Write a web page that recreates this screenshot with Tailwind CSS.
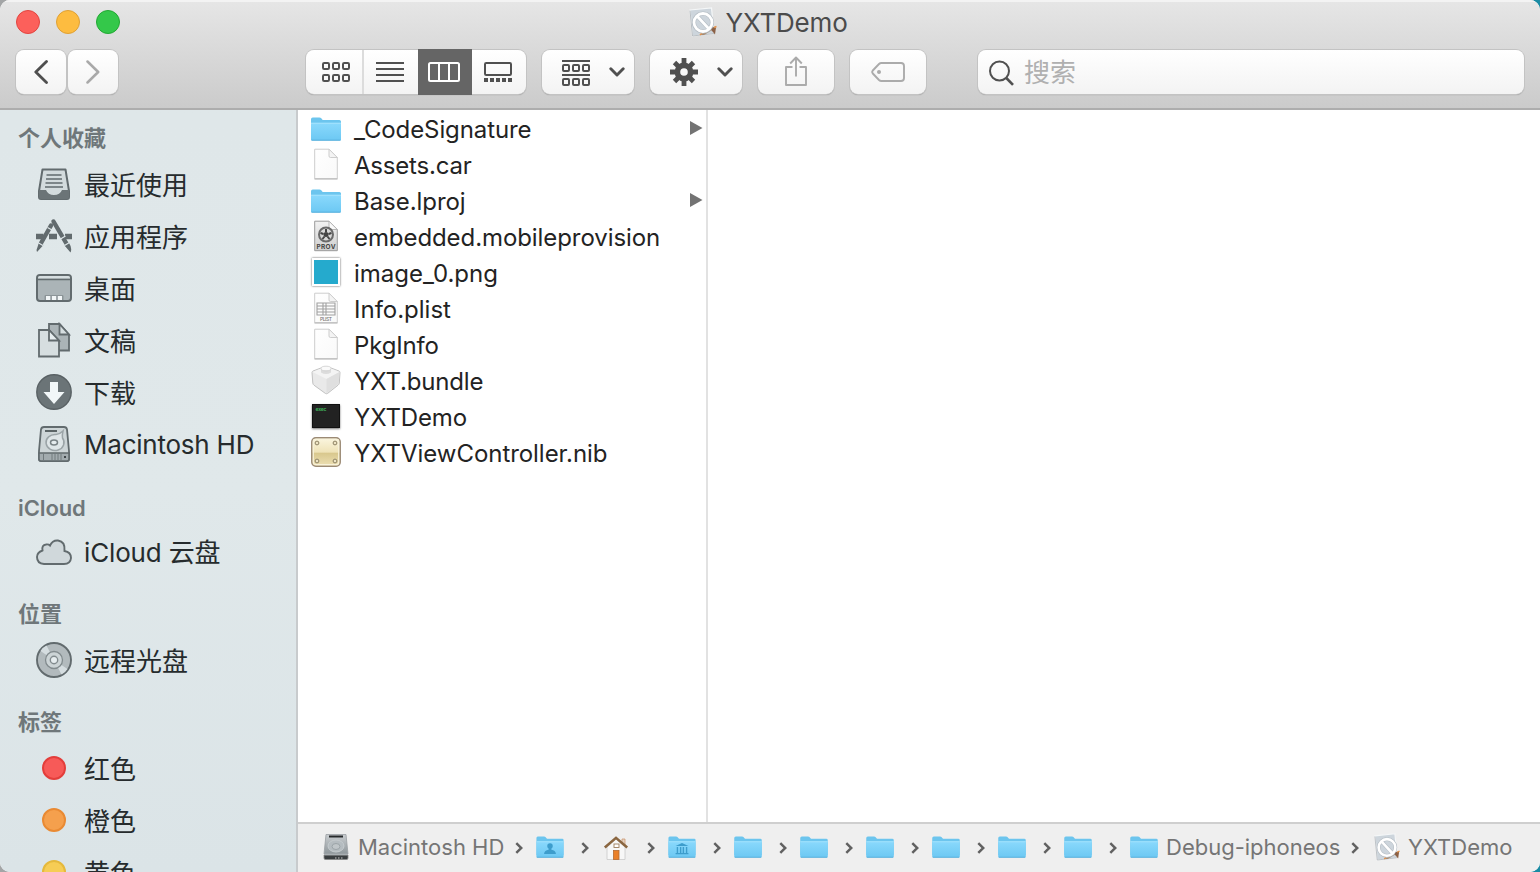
<!DOCTYPE html>
<html lang="zh-CN">
<head>
<meta charset="utf-8">
<title>YXTDemo</title>
<script src="https://cdn.jsdelivr.net/npm/@tailwindcss/browser@4"></script>
</head>
<body class="bg-linear-to-r from-[#a3a5a6] from-50% to-[#1a8ba3] to-50% font-['Inter','Noto_Sans_CJK_SC',sans-serif]">
<svg class="absolute size-0">
  <defs>
    <linearGradient id="gFolder" x1="0" y1="0" x2="0" y2="1"><stop offset="0" stop-color="#8ad9fc"/><stop offset="1" stop-color="#6cc8f3"/></linearGradient>
    <linearGradient id="gPaper" x1="0" y1="0" x2="1" y2="1"><stop offset="0" stop-color="#fff"/><stop offset="1" stop-color="#f9f9f9"/></linearGradient>
    <linearGradient id="gProv" x1="0" y1="0" x2="0" y2="1"><stop offset="0" stop-color="#f2f2f2"/><stop offset="1" stop-color="#cfcfcf"/></linearGradient>
    <linearGradient id="gNib" x1="0" y1="0" x2="0" y2="1"><stop offset="0" stop-color="#fbf6e0"/><stop offset=".5" stop-color="#efe3b8"/><stop offset=".55" stop-color="#d9c88e"/><stop offset="1" stop-color="#ede0b4"/></linearGradient>
    <linearGradient id="gDisk" x1="0" y1="0" x2="0" y2="1"><stop offset="0" stop-color="#c9cdd0"/><stop offset="1" stop-color="#8f979b"/></linearGradient>
  </defs>
  <symbol id="folder" viewBox="0 0 30 24">
    <path d="M0 2.200Q0 .5 1.700 .5H8.500Q9.600 .5 10.300 1.300L11.200 2.400Q11.700 3 12.600 3H28.400Q30 3 30 4.600V21H0Z" fill="#6cc5ee"/>
    <path d="M0 5.800H30V22.200Q30 23.500 28.700 23.500H1.300Q0 23.500 0 22.200Z" fill="url(#gFolder)"/>
    <path d="M0 6.300H30" stroke="#a4e3fd" stroke-width="1"/>
    <path d="M.5 23.200H29.500" stroke="#56aedb" stroke-width="1"/>
  </symbol>
  <symbol id="doc" viewBox="0 0 24 32">
    <path d="M.7 1.200H15L23.300 9.500V30.700H.7Z" fill="url(#gPaper)" stroke="#cdcdcd" stroke-width="1"/>
    <path d="M15 1.200V8Q15 9.500 16.500 9.500H23.300Z" fill="#f4f4f4" stroke="#cdcdcd" stroke-width="1"/>
    <path d="M.5 31H23.500" stroke="#b3b3b3" stroke-width="1"/>
  </symbol>
  <symbol id="app" viewBox="0 0 28 30">
    <path d="M1 3L22.500 .8L25 26.500L3.500 29Z" fill="#cdd5dc" stroke="#f5f7f8" stroke-width="1.200"/>
    <path d="M1 3.600L3.500 29L25 26.500" fill="none" stroke="#aab0b5" stroke-width=".8"/>
    <path d="M11 28L23.500 19.500L25.500 21.500L15 28Z" fill="#a98b70"/>
    <path d="M20 20L27 20.500L26 27.500L23.500 24.500Z" fill="#8b6045"/>
    <path d="M25 20.500L27.500 19.500M11 28L13 26" stroke="#e3924b" stroke-width="1.500"/>
    <circle cx="14" cy="15.500" r="9" fill="none" stroke="#b4bcc3" stroke-width="4"/>
    <path d="M8.200 9.200L20 21.800" stroke="#b4bcc3" stroke-width="4"/>
    <circle cx="14" cy="15.500" r="9" fill="none" stroke="#fff" stroke-width="2.800"/>
    <path d="M8 9L20 22" stroke="#fff" stroke-width="2.800"/>
  </symbol>
  <symbol id="chev" viewBox="0 0 8 12"><path d="M1.300 1.200L6.300 6L1.300 10.800" fill="none" stroke="#616161" stroke-width="2.500"/></symbol>
  <symbol id="down" viewBox="0 0 16 10"><path d="M1.800 1.800L8 8L14.200 1.800" fill="none" stroke="#505050" stroke-width="2.900" stroke-linecap="round" stroke-linejoin="round"/></symbol>
</svg>

<div class="flex h-[872px] w-[1540px] flex-col overflow-hidden rounded-[10px] bg-white">
  <header class="flex h-[110px] shrink-0 flex-col border-b-2 border-[#adadad] bg-linear-to-b from-[#e6e6e6] to-[#cbcbcb] shadow-[inset_0_2px_0_#f3f3f3]">
    <div class="grid h-[50px] grid-cols-[300px_1fr_304px]">
      <div class="flex gap-4 pl-4 pt-[10px]">
        <i class="size-6 rounded-full border border-[#e2443f] bg-[#fc605b]"></i>
        <i class="size-6 rounded-full border border-[#dfa034] bg-[#fdbc40]"></i>
        <i class="size-6 rounded-full border border-[#22a833] bg-[#34c84a]"></i>
      </div>
      <div class="flex h-[44px] items-center justify-center gap-[9px]">
        <svg class="h-[30px] w-7"><use href="#app"/></svg>
        <h1 class="w-[122px] whitespace-nowrap text-[26px] tracking-[-0.200px] text-[#4b4b4b]">YXTDemo</h1>
      </div>
    </div>
    <div class="flex h-11 pl-4">
      <button class="flex h-11 w-[50px] items-center justify-center rounded-[8px] bg-linear-to-b from-white to-[#f3f3f3] shadow-[0_0_0_1px_#c3c3c3,0_1px_1px_#888]">
        <svg class="h-6 w-[14px]" viewBox="0 0 14 24" fill="none" stroke="#4f4f4f" stroke-width="2.800" stroke-linecap="round" stroke-linejoin="round"><path d="M12.500 1.500L1.800 12L12.500 22.500"/></svg>
      </button>
      <button class="ml-[2px] flex h-11 w-[50px] items-center justify-center rounded-[8px] bg-linear-to-b from-white to-[#f3f3f3] shadow-[0_0_0_1px_#c3c3c3,0_1px_1px_#888]">
        <svg class="h-6 w-[14px]" viewBox="0 0 14 24" fill="none" stroke="#a9a9a9" stroke-width="2.500" stroke-linecap="round" stroke-linejoin="round"><path d="M1.500 1.500L12.200 12L1.500 22.500"/></svg>
      </button>
      <div class="ml-[188px] flex h-11 w-[220px] rounded-[8px] bg-linear-to-b from-white to-[#f3f3f3] shadow-[0_0_0_1px_#c3c3c3,0_1px_1px_#888]">
        <div class="flex w-[58px] items-center justify-center border-r-2 border-[#dcdcdc] pl-1">
          <svg class="h-5 w-7" viewBox="0 0 28 20" fill="none" stroke="#505050" stroke-width="2"><rect x="1" y="1" width="6" height="6" rx="1.200"/><rect x="11" y="1" width="6" height="6" rx="1.200"/><rect x="21" y="1" width="6" height="6" rx="1.200"/><rect x="1" y="13" width="6" height="6" rx="1.200"/><rect x="11" y="13" width="6" height="6" rx="1.200"/><rect x="21" y="13" width="6" height="6" rx="1.200"/></svg>
        </div>
        <div class="flex w-[54px] items-center justify-center pr-[2px]">
          <svg class="h-5 w-7" viewBox="0 0 28 20" stroke="#505050" stroke-width="2"><path d="M0 1H28M0 7H28M0 13H28M0 19H28"/></svg>
        </div>
        <div class="-mt-px flex h-[46px] w-[54px] items-center justify-center bg-[#656565] pr-[2px]">
          <svg class="h-5 w-8" viewBox="0 0 32 20" fill="none" stroke="#fff" stroke-width="2"><rect x="1" y="1" width="30" height="18" rx="1.500"/><path d="M11 1V19M21 1V19"/></svg>
        </div>
        <div class="flex w-[54px] items-center justify-center pr-[2px]">
          <svg class="h-5 w-7" viewBox="0 0 28 20"><rect x="1" y="1" width="26" height="12" rx="1.200" fill="none" stroke="#505050" stroke-width="2"/><path d="M0 18H28" stroke="#505050" stroke-width="4" stroke-dasharray="4 2"/></svg>
        </div>
      </div>
      <button class="ml-4 flex h-11 w-[92px] items-center gap-[19px] rounded-[8px] bg-linear-to-b from-white to-[#f3f3f3] pl-5 shadow-[0_0_0_1px_#c3c3c3,0_1px_1px_#888]">
        <svg class="mt-[2px] h-[26px] w-7" viewBox="0 0 28 26" fill="none" stroke="#505050" stroke-width="2"><path d="M0 1H28M0 15H28"/><rect x="1" y="5" width="6" height="6" rx="1"/><rect x="11" y="5" width="6" height="6" rx="1"/><rect x="21" y="5" width="6" height="6" rx="1"/><rect x="1" y="19" width="6" height="6" rx="1"/><rect x="11" y="19" width="6" height="6" rx="1"/><rect x="21" y="19" width="6" height="6" rx="1"/></svg>
        <svg class="h-[10px] w-4"><use href="#down"/></svg>
      </button>
      <button class="ml-4 flex h-11 w-[92px] items-center gap-[19px] rounded-[8px] bg-linear-to-b from-white to-[#f3f3f3] pl-5 shadow-[0_0_0_1px_#c3c3c3,0_1px_1px_#888]">
        <svg class="size-7" viewBox="-14 -14 28 28"><g stroke="#505050" stroke-width="4.800"><path d="M0 -14V-7M0 14V7M-14 0H-7M14 0H7M-9.500 -9.500L-5 -5M9.500 9.500L5 5M-9.500 9.500L-5 5M9.500 -9.500L5 -5"/></g><circle r="6.600" fill="none" stroke="#505050" stroke-width="5.600"/></svg>
        <svg class="h-[10px] w-4"><use href="#down"/></svg>
      </button>
      <button class="ml-4 flex h-11 w-[76px] items-center justify-center rounded-[8px] bg-linear-to-b from-white to-[#f3f3f3] shadow-[0_0_0_1px_#c3c3c3,0_1px_1px_#888]">
        <svg class="-mt-[3px] h-[30px] w-[22px]" viewBox="0 0 22 30" fill="none" stroke="#ababab" stroke-width="1.900" stroke-linejoin="round"><path d="M7.500 11H1V29H21V11H14.500M11 20.500V1.500M5.200 7.500L11 1.500L16.800 7.500"/></svg>
      </button>
      <button class="ml-4 flex h-11 w-[76px] items-center justify-center rounded-[8px] bg-linear-to-b from-white to-[#f3f3f3] shadow-[0_0_0_1px_#c3c3c3,0_1px_1px_#888]">
        <svg class="h-5 w-[34px]" viewBox="0 0 34 20"><path d="M10.500 1H30Q33 1 33 4V16Q33 19 30 19H10.500Q9 19 8 18L1.800 11.500Q.6 10 1.800 8.500L8 2Q9 1 10.500 1Z" fill="none" stroke="#ababab" stroke-width="1.900"/><circle cx="8" cy="10" r="2" fill="#ababab"/></svg>
      </button>
      <div class="ml-[52px] flex h-11 w-[546px] items-center gap-[10px] rounded-[8px] bg-linear-to-b from-white to-[#f3f3f3] pl-[10px] shadow-[0_0_0_1px_#c3c3c3,0_1px_1px_#888]">
        <svg class="mt-[2px] size-[26px]" viewBox="0 0 26 26" fill="none" stroke="#505050" stroke-width="2"><circle cx="11.500" cy="11" r="9.500"/><path d="M18.300 18L25 24.800" stroke-width="2.600"/></svg>
        <span class="mt-px text-[26px] text-[#b0b0b0]">搜索</span>
      </div>
    </div>
  </header>

  <div class="flex min-h-0 flex-1">
    <aside class="flex w-[298px] shrink-0 flex-col overflow-hidden border-r-2 border-[#c8cbcd] bg-linear-to-b from-[#dfe7e9] via-[#e0e8ea] to-[#dbe4e7] text-[26px] text-[#262b2d]">
      <h2 class="h-12 shrink-0 pl-[18px] pt-3 text-[22px] font-semibold leading-8 text-[#6f777a]">个人收藏</h2>
      <div class="flex h-[52px] shrink-0 items-center gap-3 pl-9">
        <svg class="size-9" viewBox="0 0 36 36"><path d="M6.500 3.500H29.500L33 25V31Q33 33 31 33H5Q3 33 3 31V25Z" fill="#d3dbdd" stroke="#626b6e" stroke-width="2" stroke-linejoin="round"/><path d="M3 24H10Q12 29 18 29Q24 29 26 24H33V31Q33 33 31 33H5Q3 33 3 31Z" fill="#6b7477"/><path d="M10.500 9H25.500M10 13H26M9.500 17H26.500M9 21H27" stroke="#626b6e" stroke-width="1.600"/></svg>
        <span class="pt-[2px]">最近使用</span>
      </div>
      <div class="flex h-[52px] shrink-0 items-center gap-3 pl-9">
        <svg class="size-9" viewBox="0 0 36 36" stroke="#626b6e" fill="#626b6e"><path d="M0 18.500H7.500M13 18.500H21M29 18.500H36" stroke-width="5.600"/><path d="M15 7.500L4.800 25.500" stroke-width="4.400" stroke-linecap="round"/><path d="M17.500 3.500L31 26.500" stroke-width="4.400" stroke-linecap="round"/><path d="M3 24.500L7.500 27L1 34L.5 32Z M33 25L28.500 27.500L34.500 34.500Q36.500 30 33 25Z" stroke="none"/><path d="M11.500 9.500L16 12M1.800 24.500L7.300 27.700M28.500 27.500L33.500 24.500M24.500 21L29.500 18" stroke="#dfe7e9" stroke-width="1.200"/></svg>
        <span class="pt-[2px]">应用程序</span>
      </div>
      <div class="flex h-[52px] shrink-0 items-center gap-3 pl-9">
        <svg class="size-9" viewBox="0 0 36 36"><rect x="1" y="5" width="34" height="26" rx="3" fill="#abb4b7" stroke="#626b6e" stroke-width="2"/><path d="M2 8Q2 6 4 6H32Q34 6 34 8V8.500H2Z" fill="#d6dee0"/><path d="M1 9.500H35" stroke="#626b6e" stroke-width="1.600"/><path d="M9 30V25.500H27V30" fill="#8c9598" stroke="#8c9598" stroke-width="1"/><path d="M10 28H26" stroke="#f2f6f7" stroke-width="4" stroke-dasharray="4.300 1.600"/></svg>
        <span class="pt-[2px]">桌面</span>
      </div>
      <div class="flex h-[52px] shrink-0 items-center gap-3 pl-9">
        <svg class="size-9" viewBox="0 0 36 36" stroke="#626b6e" stroke-width="1.800"><path d="M13 2H23.500L33 12.500V28.500H13Z" fill="#abb4b7"/><path d="M23.500 2V12.500H33Z" fill="#d6dee0"/><path d="M3 8H13L23 18.500V34.500H3Z" fill="#d6dee0"/><path d="M13 8V18.500H23Z" fill="#e6edef"/></svg>
        <span class="pt-[2px]">文稿</span>
      </div>
      <div class="flex h-[52px] shrink-0 items-center gap-3 pl-9">
        <svg class="size-9" viewBox="0 0 36 36"><circle cx="18" cy="18" r="17.200" fill="#6b7477" stroke="#596164" stroke-width="1.400"/><path d="M14 8H22V18H28.500L18 30L7.500 18H14Z" fill="#f2f7f8"/></svg>
        <span class="pt-[2px]">下载</span>
      </div>
      <div class="flex h-[52px] shrink-0 items-center gap-3 pl-9">
        <svg class="size-9" viewBox="0 0 36 36"><path d="M8 1H28Q30.500 1 31 3.500L33 25V33Q33 35 31 35H5Q3 35 3 33V25L5 3.500Q5.500 1 8 1Z" fill="#cdd5d7" stroke="#626b6e" stroke-width="1.800"/><path d="M3 27H33V33Q33 35 31 35H5Q3 35 3 33Z" fill="#a2abae" stroke="#626b6e" stroke-width="1.600"/><path d="M9 5H21" stroke="#4f575a" stroke-width="1.800"/><path d="M27 5Q26 9 26.500 12A9 8 0 1 1 20 8.500Q24 8 27 5Z" fill="#dfe6e8" stroke="#9ba4a7" stroke-width="1.500"/><ellipse cx="18" cy="16.500" rx="3.500" ry="2.500" fill="#e6edef" stroke="#7a8386" stroke-width="1.500"/><path d="M7.500 27V34M16 27V34M19 27V34M22 27V34M25 27V34" stroke="#717a7d" stroke-width="1"/><rect x="28" y="30" width="2" height="2" fill="#3f4649"/></svg>
        <span class="whitespace-nowrap tracking-[-0.230px]">Macintosh HD</span>
      </div>
      <h2 class="h-14 shrink-0 pl-[18px] pt-[22px] text-[22px] font-semibold leading-8 tracking-[-0.100px] text-[#6f777a]">iCloud</h2>
      <div class="flex h-[52px] shrink-0 items-center gap-3 pl-9">
        <svg class="size-9" viewBox="0 0 36 36"><path d="M8 30Q1 29.500 1 23Q1 18.500 6.500 16.500Q5.500 11 10 10.500Q12.500 10 14 11.500Q16.500 6 22 6.500Q29.500 7.500 28.500 17Q35 18 35 24Q34.500 30 28 30Z" fill="#d0d8db" stroke="#626b6e" stroke-width="1.900"/></svg>
        <span class="whitespace-nowrap pt-px tracking-[-0.150px]">iCloud 云盘</span>
      </div>
      <h2 class="h-14 shrink-0 pl-[18px] pt-5 text-[22px] font-semibold leading-8 text-[#6f777a]">位置</h2>
      <div class="flex h-[52px] shrink-0 items-center gap-3 pl-9">
        <svg class="size-9" viewBox="0 0 36 36"><circle cx="18" cy="18" r="17" fill="#b2babd" stroke="#626b6e" stroke-width="1.900"/><path d="M18 18L4.500 9Q7 5 10.500 3.500ZM18 18L31.500 27Q29 31 25.500 32.500Z" fill="#d5dde0"/><circle cx="18" cy="18" r="8.500" fill="#ccd4d6" stroke="#828b8e" stroke-width="1.300"/><circle cx="18" cy="18" r="3.700" fill="#e6edef" stroke="#828b8e" stroke-width="1.400"/></svg>
        <span class="pt-[2px]">远程光盘</span>
      </div>
      <h2 class="h-14 shrink-0 pl-[18px] pt-5 text-[22px] font-semibold leading-8 text-[#6f777a]">标签</h2>
      <div class="flex h-[52px] shrink-0 items-center gap-[18px] pl-[42px]"><i class="size-6 rounded-full border-2 border-[#e33e3b] bg-[#f75a58]"></i><span class="pt-[2px]">红色</span></div>
      <div class="flex h-[52px] shrink-0 items-center gap-[18px] pl-[42px]"><i class="size-6 rounded-full border-2 border-[#e98a33] bg-[#f5a04d]"></i><span class="pt-[2px]">橙色</span></div>
      <div class="flex h-[52px] shrink-0 items-center gap-[18px] pl-[42px]"><i class="size-6 rounded-full border-2 border-[#e5b93c] bg-[#f6cd55]"></i><span class="pt-[2px]">黄色</span></div>
    </aside>

    <main class="flex min-w-0 flex-1 flex-col">
      <div class="flex min-h-0 flex-1">
        <ul class="w-[410px] border-r-2 border-[#e2e2e2] pt-[2px] text-[24px] leading-9 text-[#232323]">
          <li class="flex h-9 items-center pl-3 pr-[3px]"><span class="flex w-8 justify-center"><svg class="mb-[3px] h-6 w-[30px]"><use href="#folder"/></svg></span><span class="ml-3 flex-1 tracking-[-0.100px]">_CodeSignature</span><svg class="mb-1 h-[14px] w-[14px]" viewBox="0 0 14 14"><path d="M1 0L13.500 7L1 14Z" fill="#737373"/></svg></li>
          <li class="flex h-9 items-center pl-3"><span class="flex w-8 justify-center"><svg class="mb-1 h-8 w-6"><use href="#doc"/></svg></span><span class="ml-3 tracking-[-0.200px]">Assets.car</span></li>
          <li class="flex h-9 items-center pl-3 pr-[3px]"><span class="flex w-8 justify-center"><svg class="mb-[3px] h-6 w-[30px]"><use href="#folder"/></svg></span><span class="ml-3 flex-1 tracking-[-0.050px]">Base.lproj</span><svg class="mb-1 h-[14px] w-[14px]" viewBox="0 0 14 14"><path d="M1 0L13.500 7L1 14Z" fill="#737373"/></svg></li>
          <li class="flex h-9 items-center pl-3"><span class="flex w-8 justify-center"><svg class="mb-1 h-8 w-6" viewBox="0 0 24 32"><path d="M.7 1.200H15L23.300 9.500V30.700H.7Z" fill="url(#gProv)" stroke="#9b9b9b"/><path d="M15 1.200V9.500H23.300Z" fill="#fafafa" stroke="#b5b5b5"/><circle cx="12" cy="14.500" r="7" fill="#d8d8d8" stroke="#6a6a6a" stroke-width="2"/><circle cx="12" cy="14.500" r="2.500" fill="#444"/><path d="M12 9V12M6.500 13L9.500 14M17.500 13L14.500 14M8.500 19L10.500 16.500M15.500 19L13.500 16.500" stroke="#444" stroke-width="2"/><text x="12" y="29" text-anchor="middle" font-size="6.500" font-weight="700" fill="#444" textLength="19">PROV</text></svg></span><span class="ml-3 whitespace-nowrap tracking-[-0.080px]">embedded.mobileprovision</span></li>
          <li class="flex h-9 items-center pl-3"><span class="flex w-8 justify-center"><i class="mb-1 block size-7 border-2 border-white bg-[#25aacd] shadow-[0_0_2px_#555]"></i></span><span class="ml-3">image_0.png</span></li>
          <li class="flex h-9 items-center pl-3"><span class="flex w-8 justify-center"><svg class="mb-1 h-8 w-6" viewBox="0 0 24 32"><use href="#doc" width="24" height="32"/><path d="M3 11H21V23H3ZM3 14H21M3 17H21M3 20H21M9 11V23M12 11V23" fill="none" stroke="#a0a0a0" stroke-width="1.100"/><text x="12" y="29" text-anchor="middle" font-size="5" font-weight="500" fill="#777" textLength="12">PLIST</text></svg></span><span class="ml-3">Info.plist</span></li>
          <li class="flex h-9 items-center pl-3"><span class="flex w-8 justify-center"><svg class="mb-1 h-8 w-6"><use href="#doc"/></svg></span><span class="ml-3 tracking-[-0.150px]">PkgInfo</span></li>
          <li class="flex h-9 items-center pl-3"><span class="flex w-8 justify-center"><svg class="mb-1 h-[30px] w-[30px]" viewBox="0 0 30 30"><path d="M1 7.500Q1 6.500 2 6L10 3H20L28 6Q29 6.500 29 7.500L28.300 18Q28 19.500 27 20.200L16.500 28.500Q15.500 29 14.500 28.500L3 20.200Q2 19.500 1.800 18Z" fill="#e9e9e9" stroke="#c2c2c2"/><path d="M1.500 7L10 3.500H20L28.500 7L15.500 14Z" fill="#f4f4f4"/><path d="M15.500 14L28.500 7L27.800 18.500L15.500 28.300Z" fill="#dfdfdf"/><path d="M10 3.500V7.500Q15 10.500 20 7.500V3.500" fill="#dcdcdc"/><ellipse cx="15" cy="3.500" rx="5" ry="2.300" fill="#fafafa" stroke="#cdcdcd" stroke-width=".8"/></svg></span><span class="ml-3 tracking-[-0.150px]">YXT.bundle</span></li>
          <li class="flex h-9 items-center pl-3"><span class="flex w-8 justify-center"><svg class="mb-1 h-6 w-7 shadow-[0_1px_2px_#777]" viewBox="0 0 28 24"><path d="M0 0H28V24H0Z" fill="#222"/><path d="M.5 .5H27.500V23.500H.5Z" fill="none" stroke="#111"/><text x="3.500" y="6.500" font-size="5" font-weight="700" fill="#3fae58" textLength="11">exec</text></svg></span><span class="ml-3 tracking-[-0.150px]">YXTDemo</span></li>
          <li class="flex h-9 items-center pl-3"><span class="flex w-8 justify-center"><svg class="mb-1 size-[30px]" viewBox="0 0 30 30"><rect x=".8" y=".8" width="28.400" height="28.400" rx="4" fill="url(#gNib)" stroke="#9b8a75" stroke-width="1.500"/><rect x="2.300" y="2.300" width="25.400" height="25.400" rx="2.800" fill="none" stroke="#f8f2da" stroke-width="1.200"/><g fill="#eee4c4" stroke="#8d8263" stroke-width="1"><circle cx="6" cy="6" r="1.900"/><circle cx="24" cy="6" r="1.900"/><circle cx="6" cy="24" r="1.900"/><circle cx="24" cy="24" r="1.900"/></g></svg></span><span class="ml-3 whitespace-nowrap tracking-[-0.050px]">YXTViewController.nib</span></li>
        </ul>
        <div class="flex-1 bg-white"></div>
      </div>

      <footer class="flex h-[50px] shrink-0 items-center border-t-2 border-[#cfcfcf] bg-[#efefef] pb-[2px] pl-6 text-[22px] text-[#757575]">
        <svg class="h-7 w-7" viewBox="0 0 28 28"><path d="M4 1.500H24L26 21H2Z" fill="url(#gDisk)" stroke="#9aa0a3" stroke-width=".8"/><path d="M2 22H26V25Q26 26.500 24.500 26.500H3.500Q2 26.500 2 25Z" fill="#3a3e40" stroke="#888" stroke-width=".8"/><path d="M2.500 21.500H25.500" stroke="#a9afb2" stroke-width="1.500"/><path d="M7 3.500H21" stroke="#26292b" stroke-width="2"/><ellipse cx="14" cy="13" rx="8" ry="6" fill="#b5bcc0" stroke="#c5cbce"/><ellipse cx="14" cy="13.500" rx="4" ry="3" fill="#c0c6c9" stroke="#9ca4a8"/><path d="M13 25H22" stroke="#c5c5c5" stroke-width="1.200" stroke-dasharray="1.500 1.500"/></svg>
        <span class="ml-2 w-[147px] whitespace-nowrap">Macintosh HD</span>
        <span class="flex w-[31px] justify-center pr-1"><svg class="mt-[2px] h-3 w-2"><use href="#chev"/></svg></span>
        <svg class="h-[22px] w-7" viewBox="0 0 30 24"><use href="#folder" width="30" height="24"/><circle cx="15" cy="11" r="3" fill="#3d9dcc"/><path d="M8.500 19.500Q9 15.500 13.500 15V13H16.500V15Q21 15.500 21.500 19.500Z" fill="#3d9dcc"/></svg>
        <span class="flex w-[38px] justify-center pl-[3px]"><svg class="mt-[2px] h-3 w-2"><use href="#chev"/></svg></span>
        <svg class="mt-[2px] h-[26px] w-7" viewBox="0 0 28 26"><path d="M20 4H23V10H20Z" fill="#e3d3c3" stroke="#c98f65" stroke-width=".7"/><path d="M5 12L14 4L23 12V24.500H5Z" fill="#f7f7f7" stroke="#c9c9c9" stroke-width=".8"/><path d="M2.800 12.500L14 2.800L25.200 12.500" fill="none" stroke="#8a6640" stroke-width="2.500"/><rect x="12" y="9" width="5" height="3.500" fill="#fff" stroke="#9d7d5b" stroke-width=".9"/><rect x="11.500" y="15.500" width="5.500" height="9" fill="#ea8028" stroke="#b56a30" stroke-width=".8"/></svg>
        <span class="flex w-[38px] justify-center pl-[3px]"><svg class="mt-[2px] h-3 w-2"><use href="#chev"/></svg></span>
        <svg class="h-[22px] w-7" viewBox="0 0 30 24"><use href="#folder" width="30" height="24"/><path d="M8 11L15 7.500L22 11ZM8 18.500H22V20H8Z" fill="#3d9dcc"/><path d="M10 12V18.500M13.500 12V18.500M16.500 12V18.500M20 12V18.500" stroke="#3d9dcc" stroke-width="1.500"/></svg>
        <span class="flex w-[38px] justify-center pl-[3px]"><svg class="mt-[2px] h-3 w-2"><use href="#chev"/></svg></span>
        <svg class="h-[22px] w-7"><use href="#folder"/></svg>
        <span class="flex w-[38px] justify-center pl-[3px]"><svg class="mt-[2px] h-3 w-2"><use href="#chev"/></svg></span>
        <svg class="h-[22px] w-7"><use href="#folder"/></svg>
        <span class="flex w-[38px] justify-center pl-[3px]"><svg class="mt-[2px] h-3 w-2"><use href="#chev"/></svg></span>
        <svg class="h-[22px] w-7"><use href="#folder"/></svg>
        <span class="flex w-[38px] justify-center pl-[3px]"><svg class="mt-[2px] h-3 w-2"><use href="#chev"/></svg></span>
        <svg class="h-[22px] w-7"><use href="#folder"/></svg>
        <span class="flex w-[38px] justify-center pl-[3px]"><svg class="mt-[2px] h-3 w-2"><use href="#chev"/></svg></span>
        <svg class="h-[22px] w-7"><use href="#folder"/></svg>
        <span class="flex w-[38px] justify-center pl-[3px]"><svg class="mt-[2px] h-3 w-2"><use href="#chev"/></svg></span>
        <svg class="h-[22px] w-7"><use href="#folder"/></svg>
        <span class="flex w-[38px] justify-center pl-[3px]"><svg class="mt-[2px] h-3 w-2"><use href="#chev"/></svg></span>
        <svg class="h-[22px] w-7"><use href="#folder"/></svg>
        <span class="ml-2 w-[175px] whitespace-nowrap">Debug-iphoneos</span>
        <span class="flex w-[33px] justify-center pr-[5px]"><svg class="mt-[2px] h-3 w-2"><use href="#chev"/></svg></span>
        <svg class="h-7 w-[26px]"><use href="#app"/></svg>
        <span class="ml-2 whitespace-nowrap">YXTDemo</span>
      </footer>
    </main>
  </div>
</div>
</body>
</html>
